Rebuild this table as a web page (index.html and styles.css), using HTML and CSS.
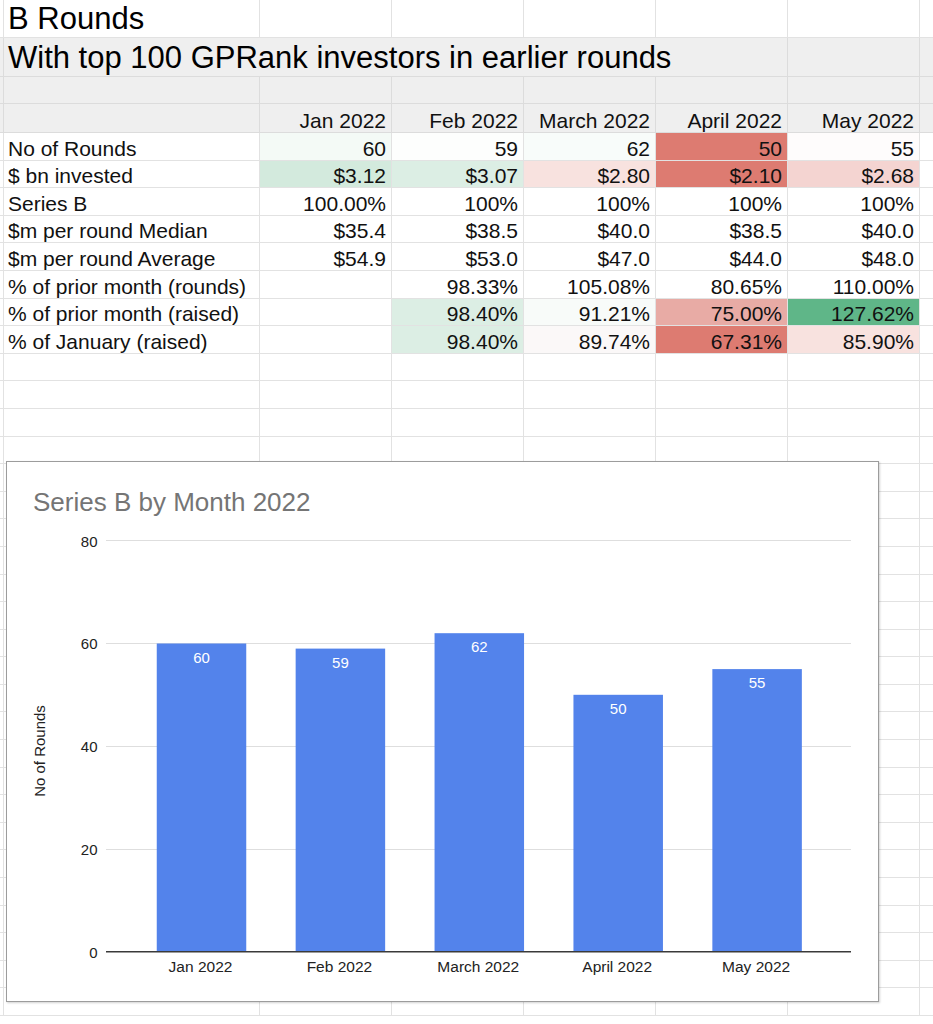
FILE: index.html
```html
<!DOCTYPE html>
<html>
<head>
<meta charset="utf-8">
<link rel="stylesheet" href="styles.css">
</head>
<body>
<div class="sheet">
  <div class="row r-title">
    <div class="c"></div><div class="c title">B Rounds</div><div class="c"></div><div class="c"></div><div class="c"></div><div class="c"></div><div class="c"></div><div class="c"></div>
  </div>
  <div class="row r-sub gray">
    <div class="c"></div><div class="c title span5">With top 100 GPRank investors in earlier rounds</div><div class="c"></div><div class="c"></div>
  </div>
  <div class="row r-empty gray">
    <div class="c"></div><div class="c"></div><div class="c"></div><div class="c"></div><div class="c"></div><div class="c"></div><div class="c"></div><div class="c"></div>
  </div>
  <div class="row r-head gray">
    <div class="c"></div><div class="c"></div><div class="c num">Jan 2022</div><div class="c num">Feb 2022</div><div class="c num">March 2022</div><div class="c num">April 2022</div><div class="c num">May 2022</div><div class="c"></div>
  </div>
  <div class="row r-data">
    <div class="c"></div><div class="c lbl">No of Rounds</div><div class="c num g0">60</div><div class="c num w1">59</div><div class="c num g0b">62</div><div class="c num red">50</div><div class="c num w2">55</div><div class="c"></div>
  </div>
  <div class="row r-data">
    <div class="c"></div><div class="c lbl">$ bn invested</div><div class="c num g2">$3.12</div><div class="c num g1">$3.07</div><div class="c num p1">$2.80</div><div class="c num red">$2.10</div><div class="c num p2">$2.68</div><div class="c"></div>
  </div>
  <div class="row r-data">
    <div class="c"></div><div class="c lbl">Series B</div><div class="c num">100.00%</div><div class="c num">100%</div><div class="c num">100%</div><div class="c num">100%</div><div class="c num">100%</div><div class="c"></div>
  </div>
  <div class="row r-data">
    <div class="c"></div><div class="c lbl">$m per round Median</div><div class="c num">$35.4</div><div class="c num">$38.5</div><div class="c num">$40.0</div><div class="c num">$38.5</div><div class="c num">$40.0</div><div class="c"></div>
  </div>
  <div class="row r-data">
    <div class="c"></div><div class="c lbl">$m per round Average</div><div class="c num">$54.9</div><div class="c num">$53.0</div><div class="c num">$47.0</div><div class="c num">$44.0</div><div class="c num">$48.0</div><div class="c"></div>
  </div>
  <div class="row r-data">
    <div class="c"></div><div class="c lbl">% of prior month (rounds)</div><div class="c num"></div><div class="c num">98.33%</div><div class="c num">105.08%</div><div class="c num">80.65%</div><div class="c num">110.00%</div><div class="c"></div>
  </div>
  <div class="row r-data">
    <div class="c"></div><div class="c lbl">% of prior month (raised)</div><div class="c num"></div><div class="c num g1">98.40%</div><div class="c num w3">91.21%</div><div class="c num p3">75.00%</div><div class="c num g3">127.62%</div><div class="c"></div>
  </div>
  <div class="row r-data">
    <div class="c"></div><div class="c lbl">% of January (raised)</div><div class="c num"></div><div class="c num g1">98.40%</div><div class="c num w4">89.74%</div><div class="c num red">67.31%</div><div class="c num p1">85.90%</div><div class="c"></div>
  </div>
  <div class="row r-data"><div class="c"></div><div class="c"></div><div class="c"></div><div class="c"></div><div class="c"></div><div class="c"></div><div class="c"></div><div class="c"></div></div>
  <div class="row r-data"><div class="c"></div><div class="c"></div><div class="c"></div><div class="c"></div><div class="c"></div><div class="c"></div><div class="c"></div><div class="c"></div></div>
  <div class="row r-data"><div class="c"></div><div class="c"></div><div class="c"></div><div class="c"></div><div class="c"></div><div class="c"></div><div class="c"></div><div class="c"></div></div>
  <div class="row r-data"><div class="c"></div><div class="c"></div><div class="c"></div><div class="c"></div><div class="c"></div><div class="c"></div><div class="c"></div><div class="c"></div></div>
  <div class="row r-data"><div class="c"></div><div class="c"></div><div class="c"></div><div class="c"></div><div class="c"></div><div class="c"></div><div class="c"></div><div class="c"></div></div>
  <div class="row r-data"><div class="c"></div><div class="c"></div><div class="c"></div><div class="c"></div><div class="c"></div><div class="c"></div><div class="c"></div><div class="c"></div></div>
  <div class="row r-data"><div class="c"></div><div class="c"></div><div class="c"></div><div class="c"></div><div class="c"></div><div class="c"></div><div class="c"></div><div class="c"></div></div>
  <div class="row r-data"><div class="c"></div><div class="c"></div><div class="c"></div><div class="c"></div><div class="c"></div><div class="c"></div><div class="c"></div><div class="c"></div></div>
  <div class="row r-data"><div class="c"></div><div class="c"></div><div class="c"></div><div class="c"></div><div class="c"></div><div class="c"></div><div class="c"></div><div class="c"></div></div>
  <div class="row r-data"><div class="c"></div><div class="c"></div><div class="c"></div><div class="c"></div><div class="c"></div><div class="c"></div><div class="c"></div><div class="c"></div></div>
  <div class="row r-data"><div class="c"></div><div class="c"></div><div class="c"></div><div class="c"></div><div class="c"></div><div class="c"></div><div class="c"></div><div class="c"></div></div>
  <div class="row r-data"><div class="c"></div><div class="c"></div><div class="c"></div><div class="c"></div><div class="c"></div><div class="c"></div><div class="c"></div><div class="c"></div></div>
  <div class="row r-data"><div class="c"></div><div class="c"></div><div class="c"></div><div class="c"></div><div class="c"></div><div class="c"></div><div class="c"></div><div class="c"></div></div>
  <div class="row r-data"><div class="c"></div><div class="c"></div><div class="c"></div><div class="c"></div><div class="c"></div><div class="c"></div><div class="c"></div><div class="c"></div></div>
  <div class="row r-data"><div class="c"></div><div class="c"></div><div class="c"></div><div class="c"></div><div class="c"></div><div class="c"></div><div class="c"></div><div class="c"></div></div>
  <div class="row r-data"><div class="c"></div><div class="c"></div><div class="c"></div><div class="c"></div><div class="c"></div><div class="c"></div><div class="c"></div><div class="c"></div></div>
  <div class="row r-data"><div class="c"></div><div class="c"></div><div class="c"></div><div class="c"></div><div class="c"></div><div class="c"></div><div class="c"></div><div class="c"></div></div>
  <div class="row r-data"><div class="c"></div><div class="c"></div><div class="c"></div><div class="c"></div><div class="c"></div><div class="c"></div><div class="c"></div><div class="c"></div></div>
  <div class="row r-data"><div class="c"></div><div class="c"></div><div class="c"></div><div class="c"></div><div class="c"></div><div class="c"></div><div class="c"></div><div class="c"></div></div>
  <div class="row r-data"><div class="c"></div><div class="c"></div><div class="c"></div><div class="c"></div><div class="c"></div><div class="c"></div><div class="c"></div><div class="c"></div></div>
  <div class="row r-data"><div class="c"></div><div class="c"></div><div class="c"></div><div class="c"></div><div class="c"></div><div class="c"></div><div class="c"></div><div class="c"></div></div>
  <div class="row r-data"><div class="c"></div><div class="c"></div><div class="c"></div><div class="c"></div><div class="c"></div><div class="c"></div><div class="c"></div><div class="c"></div></div>
  <div class="row r-data"><div class="c"></div><div class="c"></div><div class="c"></div><div class="c"></div><div class="c"></div><div class="c"></div><div class="c"></div><div class="c"></div></div>
  <div class="row r-data"><div class="c"></div><div class="c"></div><div class="c"></div><div class="c"></div><div class="c"></div><div class="c"></div><div class="c"></div><div class="c"></div></div>

  <div class="chart">
    <svg class="chart-svg" width="871" height="539" viewBox="7 462 871 539" xmlns="http://www.w3.org/2000/svg">
      <text class="ctitle" x="33" y="511">Series B by Month 2022</text>
      <g class="grid">
        <line x1="106" y1="540.5" x2="851" y2="540.5"/>
        <line x1="106" y1="643.5" x2="851" y2="643.5"/>
        <line x1="106" y1="746.5" x2="851" y2="746.5"/>
        <line x1="106" y1="849.5" x2="851" y2="849.5"/>
      </g>
      <g class="ylab">
        <text x="97.5" y="546.5">80</text>
        <text x="97.5" y="649">60</text>
        <text x="97.5" y="752">40</text>
        <text x="97.5" y="855">20</text>
        <text x="97.5" y="957.5">0</text>
      </g>
      <g class="bars">
        <rect x="156.75" y="643.5" width="89.5" height="308.2"/>
        <rect x="295.65" y="648.6" width="89.5" height="303.1"/>
        <rect x="434.55" y="633.2" width="89.5" height="318.5"/>
        <rect x="573.45" y="694.8" width="89.5" height="256.9"/>
        <rect x="712.35" y="669.1" width="89.5" height="282.6"/>
      </g>
      <line class="axis" x1="106" y1="951.7" x2="851" y2="951.7"/>
      <g class="vlab">
        <text x="201.5" y="662.5">60</text>
        <text x="340.4" y="667.6">59</text>
        <text x="479.3" y="652.2">62</text>
        <text x="618.2" y="713.8">50</text>
        <text x="757.1" y="688.1">55</text>
      </g>
      <g class="xlab">
        <text x="200.5" y="972">Jan 2022</text>
        <text x="339.4" y="972">Feb 2022</text>
        <text x="478.3" y="972">March 2022</text>
        <text x="617.2" y="972">April 2022</text>
        <text x="756.1" y="972">May 2022</text>
      </g>
      <text class="ytitle" x="40" y="756" transform="rotate(-90 40 751)">No of Rounds</text>
    </svg>
  </div>
</div>
</body>
</html>
```

FILE: styles.css
```css
html, body {
  margin: 0;
  padding: 0;
  background: #ffffff;
}

body {
  width: 933px;
  height: 1024px;
  overflow: hidden;
  font-family: "Liberation Sans", Arial, sans-serif;
  color: #111111;
}

.sheet {
  position: relative;
  width: 933px;
}

.row {
  display: grid;
  grid-template-columns: 4px 256px 132px 132px 132px 132px 132px 15px;
}

.c {
  box-sizing: border-box;
  border-right: 1px solid #e2e2e2;
  border-bottom: 1px solid #e2e2e2;
  display: flex;
  align-items: flex-end;
  font-size: 21px;
  line-height: 22px;
  white-space: nowrap;
  overflow: hidden;
  min-width: 0;
}

.gray .c {
  background: #efefef;
  border-color: #dcdcdc;
}

.r-title { height: 38px; }
.r-sub { height: 39px; }
.r-empty { height: 27px; }
.r-head { height: 29px; }
.r-data { height: 27.6px; }

.title {
  font-size: 31px;
  line-height: 34px;
  padding-left: 4px;
  padding-bottom: 1px;
  color: #000000;
}

.span5 {
  grid-column: span 5;
  overflow: visible;
}

.lbl {
  padding-left: 4px;
}

.num {
  justify-content: flex-end;
  padding-right: 5px;
}

/* conditional formatting colours */
.g0 { background: #f4faf6; }
.g0b { background: #f8fcfa; }
.w1 { background: #fdfefd; }
.w2 { background: #fefcfc; }
.w3 { background: #f8fbf9; }
.w4 { background: #fbf8f8; }
.g1 { background: #dceee4; }
.g2 { background: #d3eadd; }
.g3 { background: #5fb688; }
.p1 { background: #f8e2df; }
.p2 { background: #f4d4d1; }
.p3 { background: #e8aba5; }
.red { background: #dd7b71; }

/* floating chart */
.chart {
  position: absolute;
  left: 6px;
  top: 461px;
  width: 873px;
  height: 541px;
  box-sizing: border-box;
  border: 1px solid #9c9c9c;
  background: #ffffff;
  box-shadow: 1px 1px 2px rgba(0, 0, 0, 0.18);
}

.chart-svg {
  display: block;
  font-family: "Liberation Sans", Arial, sans-serif;
}

.ctitle {
  font-size: 26px;
  fill: #757575;
}

.grid line {
  stroke: #dedede;
  stroke-width: 1;
}

.axis {
  stroke: #3a3a3a;
  stroke-width: 1.4;
}

.ylab text {
  font-size: 15px;
  fill: #222222;
  text-anchor: end;
}

.bars rect {
  fill: #5383eb;
}

.vlab text {
  font-size: 15px;
  fill: #ffffff;
  text-anchor: middle;
}

.xlab text {
  font-size: 15.5px;
  fill: #222222;
  text-anchor: middle;
}

.ytitle {
  font-size: 15px;
  fill: #222222;
  text-anchor: middle;
}
```
